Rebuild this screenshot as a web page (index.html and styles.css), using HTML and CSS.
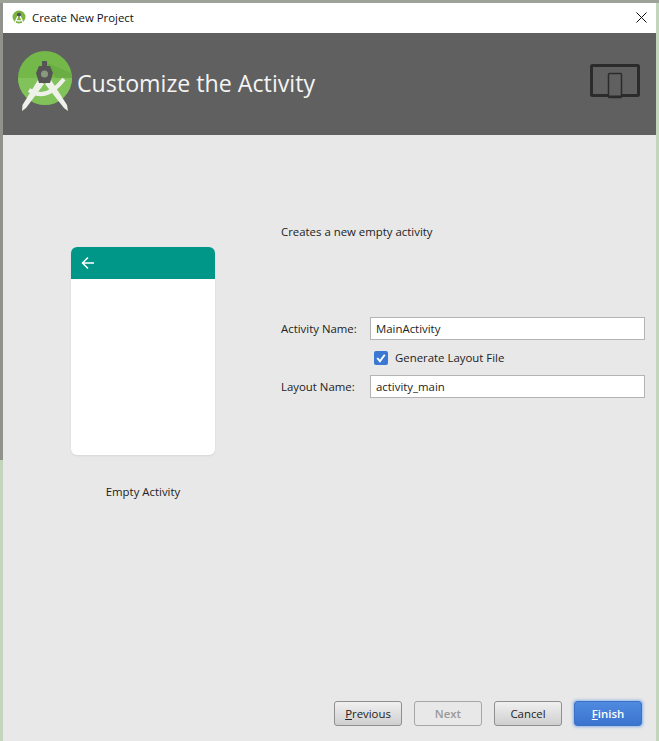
FILE: index.html
```html
<!DOCTYPE html>
<html lang="en">
<head>
    <meta charset="UTF-8"/>
    <title>Create New Project</title>
    <link rel="stylesheet" href="styles.css">
</head>
<body>
<div class="window">
    <!-- Title bar -->
    <div class="titlebar">
        <svg class="app-icon" width="14" height="14" viewBox="0 0 14 14">
            <circle cx="7" cy="7" r="6.5" fill="#7cb342"/>
            <circle cx="7" cy="5" r="2.2" fill="#4b5a4b"/>
            <path d="M6 6 L3 12.5 M8 6 L11 12.5 M3.5 10 Q7 12 10.500 10" stroke="#fff" stroke-width="1.300" fill="none"/>
        </svg>
        <span class="title">Create New Project</span>
        <svg class="close" width="11" height="11" viewBox="0 0 11 11">
            <path d="M0.500 0.500 L10.500 10.500 M10.500 0.500 L0.500 10.500" stroke="#111" stroke-width="1"/>
        </svg>
    </div>

    <!-- Header -->
    <div class="header">
        <svg class="logo" width="56" height="60" viewBox="0 0 56 60">
            <circle cx="27" cy="27" r="27" fill="#74b84a"/>
            <path d="M0 27 A27 27 0 0 0 54 27 Z" fill="#82c25a"/>
            <path d="M27 11 L53 22 L54 27 H38 Z" fill="#6aad43"/>
            <path d="M11 39 Q28 51 46 28" stroke="#eef1ea" stroke-width="4" fill="none"/>
            <path d="M20 29 L26 33 L8 57 L4 60 L4.500 54 Z" fill="#eef1ea"/>
            <path d="M33 29 L27 33 L46 57 L50 60 L49 54 Z" fill="#eef1ea"/>
            <rect x="24" y="10" width="5" height="6" fill="#555"/>
            <path d="M21 15 H32 L35 22 L32 32 H21 L18 22 Z" fill="#555"/>
            <circle cx="26.500" cy="23" r="3.500" fill="#8a9a7e"/>
        </svg>
        <h1 class="heading">Customize the Activity</h1>
        <svg class="devices" width="50" height="35" viewBox="0 0 50 35">
            <rect x="1.500" y="1.500" width="47" height="30" rx="1" fill="none" stroke="#2b2b2b" stroke-width="3"/>
            <rect x="18.500" y="9.500" width="13" height="24" rx="1" fill="#606060" stroke="#2b2b2b" stroke-width="1.500"/>
            <rect x="18" y="31.500" width="14" height="2.500" fill="#2b2b2b"/>
        </svg>
    </div>

    <!-- Main panel -->
    <div class="panel">
        <div class="content">
            <div class="preview">
                <div class="phone">
                    <div class="appbar">
                        <svg width="14" height="14" viewBox="0 0 14 14">
                            <path d="M13 7 H2 M7 1.500 L1.500 7 L7 12.500" stroke="#fff" stroke-width="1.500" fill="none"/>
                        </svg>
                    </div>
                </div>
                <div class="preview-name">Empty Activity</div>
            </div>
            <div class="form">
                <p class="description">Creates a new empty activity</p>
                <div class="row">
                    <label class="row-label">Activity Name:</label>
                    <input type="text" class="field" value="MainActivity"/>
                </div>
                <label class="check-row">
                    <span class="checkbox">
                        <svg width="14" height="14" viewBox="0 0 13 13">
                            <path d="M3 6.500 L5.500 9.500 L10 3.500" stroke="#fff" stroke-width="1.800" fill="none"/>
                        </svg>
                    </span>
                    Generate Layout File
                </label>
                <div class="row">
                    <label class="row-label">Layout Name:</label>
                    <input type="text" class="field" value="activity_main"/>
                </div>
            </div>
        </div>
        <div class="buttons">
            <button class="btn"><u>P</u>revious</button>
            <button class="btn next" disabled>Next</button>
            <button class="btn">Cancel</button>
            <button class="btn finish"><u>F</u>inish</button>
        </div>
    </div>
</div>
</body>
</html>
```

FILE: styles.css
```css
* {
    margin: 0;
    padding: 0;
    box-sizing: border-box;
}
html, body {
    height: 741px;
    overflow: hidden;
}
body {
    background:
        linear-gradient(#9da399, #9da399) no-repeat 0 0 / 100% 3px,
        linear-gradient(#8f938c, #8f938c) no-repeat 0 0 / 3px 460px,
        #c3d6bb;
    padding: 3px 3px 0 3px;
    font-family: "Open Sans", "Noto Sans", sans-serif;
    font-size: 11.4px;
    color: #222;
}
.window {
    height: 738px;
    display: flex;
    flex-direction: column;
    background: #e8e8e8;
}
.titlebar {
    height: 30px;
    flex: none;
    display: flex;
    align-items: center;
    padding: 0 9px 2px 9px;
    background: #fff;
}
.app-icon {
    margin-right: 6px;
}
.title {
    flex: 1;
    font-size: 11.4px;
    color: #111;
}
.header {
    height: 102px;
    flex: none;
    display: flex;
    align-items: center;
    padding: 0 15px;
    background: #606060;
}
.logo {
    margin-bottom: 6px;
    margin-right: 3px;
}
.heading {
    flex: 1;
    font-size: 23.2px;
    font-weight: 400;
    color: #f4f4f4;
    margin-bottom: 2px;
}
.devices {
    margin-right: 1px;
    margin-bottom: 5px;
}
.panel {
    flex: 1;
    display: flex;
    flex-direction: column;
}
.content {
    flex: 1;
    display: flex;
    padding: 89px 11px 0 68px;
}
.preview {
    width: 144px;
    margin-top: 23px;
    flex: none;
}
.phone {
    height: 208px;
    background: #fff;
    border-radius: 6px;
    overflow: hidden;
    box-shadow: 0 1px 2px rgba(0, 0, 0, 0.08);
}
.appbar {
    height: 32px;
    display: flex;
    align-items: center;
    padding-left: 10px;
    background: #009688;
}
.preview-name {
    margin-top: 29px;
    text-align: center;
    line-height: 16px;
}
.form {
    flex: 1;
    margin-left: 66px;
}
.description {
    height: 16px;
    line-height: 16px;
    margin-bottom: 77px;
}
.row {
    display: flex;
    align-items: center;
    height: 23px;
}
.row-label {
    width: 89px;
    flex: none;
}
.field {
    flex: 1;
    height: 23px;
    min-width: 0;
    padding: 0 5px;
    border: 1px solid #b4b4b4;
    background: #fff;
    font-family: inherit;
    font-size: 11.4px;
    color: #222;
    outline: none;
}
.check-row {
    display: flex;
    align-items: center;
    height: 35px;
    padding-left: 93px;
}
.checkbox {
    width: 14px;
    height: 14px;
    margin-right: 7px;
    border-radius: 2px;
    background: #3b78d4;
    display: flex;
}
.buttons {
    flex: none;
    display: flex;
    justify-content: flex-end;
    gap: 12px;
    padding: 0 14px 15px 0;
}
.btn {
    width: 68px;
    height: 25px;
    border: 1px solid #8f8f8f;
    border-radius: 3px;
    background: linear-gradient(#f0f0f0, #cfcfcf);
    font-family: inherit;
    font-size: 11.4px;
    color: #222;
}
.next {
    border-color: #a6a6a6;
    background: #e8e8e8;
    color: #999;
    font-weight: 600;
}
.finish {
    border-color: #3a72c8;
    background: linear-gradient(#4f8ae0, #3b74cf);
    box-shadow: 0 0 3px 1px #8fb4e6;
    color: #fff;
    font-weight: 600;
}
```
